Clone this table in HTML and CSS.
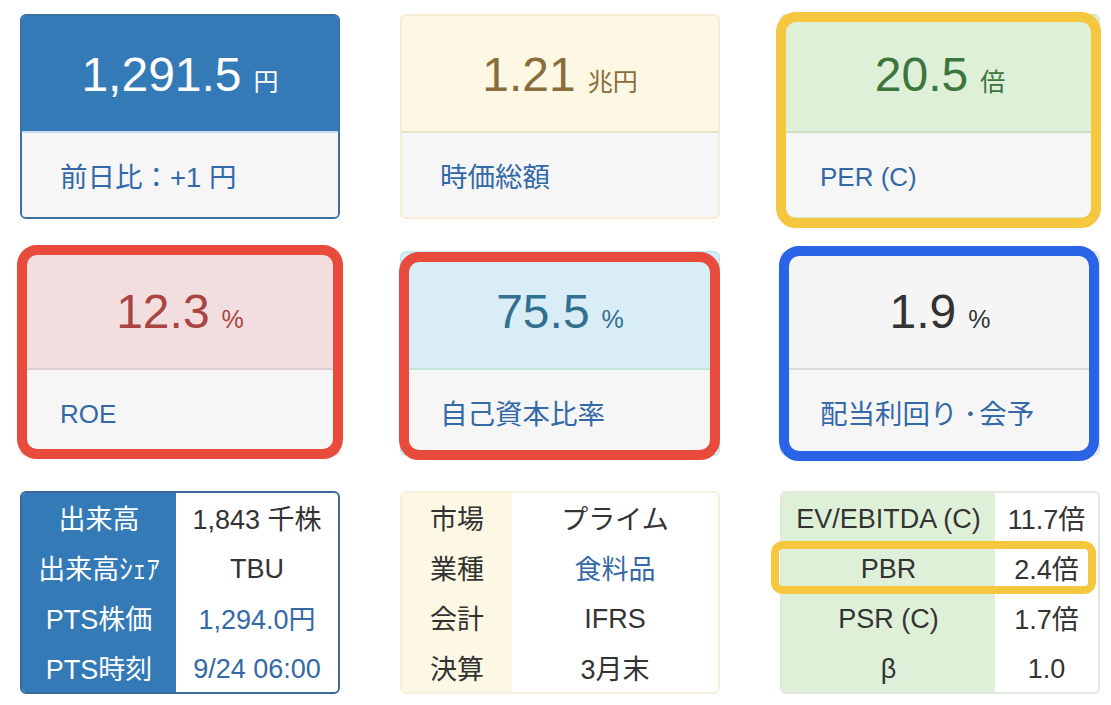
FILE: index.html
```html
<!DOCTYPE html>
<html lang="ja">
<head>
<meta charset="utf-8">
<title>株価指標</title>
<link rel="stylesheet" href="styles.css">
</head>
<body>
<div class="grid">
  <div class="cell">
    <div class="card c-primary">
      <div class="card-body"><div class="val"><span class="num">1,291.5</span><span class="unit">円</span></div></div>
      <div class="card-foot">前日比：+1 円</div>
    </div>
  </div>
  <div class="cell">
    <div class="card c-warning">
      <div class="card-body"><div class="val"><span class="num">1.21</span><span class="unit">兆円</span></div></div>
      <div class="card-foot">時価総額</div>
    </div>
  </div>
  <div class="cell">
    <div class="card c-success">
      <div class="card-body"><div class="val"><span class="num">20.5</span><span class="unit">倍</span></div></div>
      <div class="card-foot lat">PER (C)</div>
    </div>
    <div class="ring ring-yellow r-per"></div>
  </div>

  <div class="cell">
    <div class="card c-danger">
      <div class="card-body"><div class="val"><span class="num">12.3</span><span class="unit">%</span></div></div>
      <div class="card-foot lat">ROE</div>
    </div>
    <div class="ring ring-red r-roe"></div>
  </div>
  <div class="cell">
    <div class="card c-info">
      <div class="card-body"><div class="val"><span class="num">75.5</span><span class="unit">%</span></div></div>
      <div class="card-foot">自己資本比率</div>
    </div>
    <div class="ring ring-red r-eq"></div>
  </div>
  <div class="cell">
    <div class="card c-default">
      <div class="card-body"><div class="val"><span class="num">1.9</span><span class="unit">%</span></div></div>
      <div class="card-foot">配当利回り<span class="dot">･</span>会予</div>
    </div>
    <div class="ring ring-blue r-div"></div>
  </div>

  <div class="cell tcell">
    <div class="tbl t-primary">
      <div class="th">出来高</div><div class="td">1,843 千株</div>
      <div class="th">出来高ｼｪｱ</div><div class="td lat">TBU</div>
      <div class="th">PTS株価</div><div class="td link">1,294.0円</div>
      <div class="th">PTS時刻</div><div class="td link lat">9/24 06:00</div>
    </div>
  </div>
  <div class="cell tcell">
    <div class="tbl t-warning">
      <div class="th">市場</div><div class="td">プライム</div>
      <div class="th">業種</div><div class="td link">食料品</div>
      <div class="th">会計</div><div class="td lat">IFRS</div>
      <div class="th">決算</div><div class="td">3月末</div>
    </div>
  </div>
  <div class="cell tcell">
    <div class="tbl t-success">
      <div class="th lat">EV/EBITDA (C)</div><div class="td">11.7倍</div>
      <div class="th lat">PBR</div><div class="td">2.4倍</div>
      <div class="th lat">PSR (C)</div><div class="td">1.7倍</div>
      <div class="th lat">β</div><div class="td lat">1.0</div>
    </div>
    <div class="ring ring-yellow r-pbr"></div>
  </div>
</div>
</body>
</html>
```

FILE: styles.css
```css
* { box-sizing: border-box; }
html, body { margin: 0; padding: 0; background: #fff; }
body {
  font-family: "Liberation Sans", "Noto Sans CJK JP", sans-serif;
  color: #333;
}
.grid {
  display: grid;
  grid-template-columns: repeat(3, 320px);
  column-gap: 60px;
  row-gap: 32px;
  padding: 14px 0 0 20px;
}
.cell { position: relative; }
.tcell { margin-top: 3px; }

.card {
  height: 205px;
  border: 2px solid #ddd;
  border-radius: 6px;
  overflow: hidden;
  background: #f6f6f6;
}
.card-body {
  height: 115px;
  display: flex;
  align-items: center;
  justify-content: center;
}
.val {
  display: flex;
  align-items: baseline;
  gap: 12px;
  margin-top: 2px;
}
.num { font-size: 48px; line-height: 1; }
.unit { font-size: 25px; line-height: 1; }
.card-foot {
  height: 86px;
  border-top: 2px solid #ddd;
  display: flex;
  align-items: center;
  padding-left: 38px;
  font-size: 27.5px;
  color: #3469a8;
  background: #f6f6f6;
}
.card-foot.lat { font-size: 26px; padding-top: 5px; }
.dot { margin: 0 2px 0 6px; }

.c-primary { border-color: #3a72a8; }
.c-primary .card-body { background: #337ab7; color: #fff; }
.c-primary .card-foot { border-top-color: #c9dcef; }
.c-warning { border-color: #f6eed4; }
.c-warning .card-body { background: #fcf8e3; color: #8a6d3b; }
.c-warning .card-foot { border-top-color: #e9e2c8; }
.c-success { border-color: #d6e9c6; }
.c-success .card-body { background: #dff0d8; color: #3c763d; }
.c-success .card-foot { border-top-color: #cfe0c4; }
.c-danger { border-color: #ebccd1; }
.c-danger .card-body { background: #f2dede; color: #a94442; }
.c-danger .card-foot { border-top-color: #dccdd2; }
.c-info { border-color: #bce8f1; }
.c-info .card-body { background: #d9edf7; color: #31708f; }
.c-info .card-foot { border-top-color: #c3e3d8; }
.c-default { border-color: #e3e3e3; }
.c-default .card-body { background: #f5f5f5; color: #333; }
.c-default .card-foot { border-top-color: #dcdcdc; }

.tbl {
  height: 203px;
  border: 2px solid #ddd;
  border-radius: 6px;
  overflow: hidden;
  display: grid;
  grid-template-rows: repeat(4, 1fr);
  font-size: 27px;
  background: #fff;
}
.th, .td {
  display: flex;
  align-items: center;
  justify-content: center;
  white-space: nowrap;
}
.th.lat, .td.lat { padding-top: 4px; }
.td.link { color: #3469a8; }
.t-primary { grid-template-columns: 154px 1fr; border-color: #3a6a9a; }
.t-primary .th { background: #337ab7; color: #fff; }
.t-warning { grid-template-columns: 110px 1fr; border-color: #f6f0dc; }
.t-warning .th { background: #fcf8e3; }
.t-success { grid-template-columns: 213px 1fr; border-color: #e2e8de; }
.t-success .th { background: #dff0d8; }

.ring {
  position: absolute;
  border: 10px solid;
  border-radius: 20px;
  pointer-events: none;
}
.ring-yellow { border-color: #f5c73f; }
.ring-red { border-color: #e84b3c; }
.ring-blue { border-color: #2963e6; }
.r-per { left: -4px; right: -1px; top: -2px; bottom: -9px; }
.r-roe { left: -3px; right: -3px; top: -6px; bottom: -3px; }
.r-eq { left: -1px; right: 0; top: 1px; bottom: -4px; }
.r-div { left: -1px; right: 1px; top: -5px; bottom: -5px; }
.r-pbr {
  left: -9px;
  top: 50px;
  width: 325px;
  height: 53px;
  border-width: 8px;
  border-radius: 12px;
}
```
